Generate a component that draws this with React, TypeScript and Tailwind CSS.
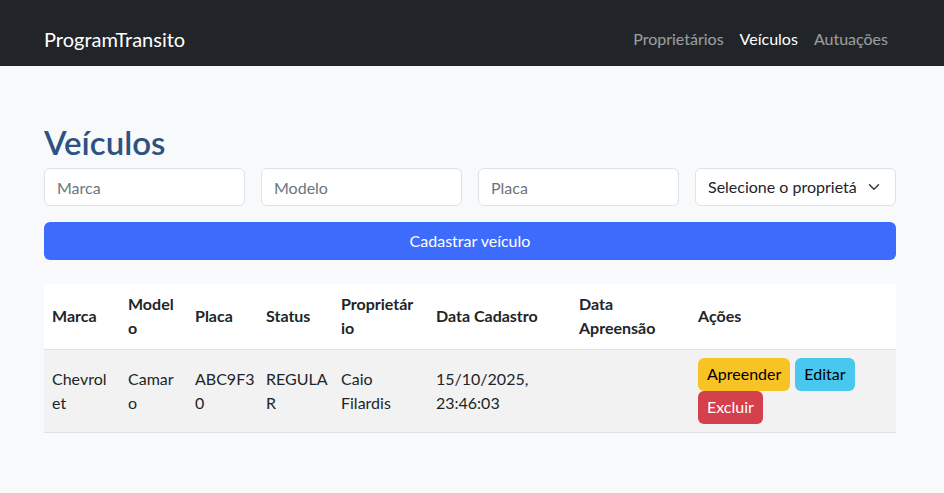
import React from "react";

const font = { fontFamily: 'Lato, "Noto Sans", sans-serif' };

function NavBar() {
  return (
    <header className="h-[66px] bg-[#212529]">
      <div className="ml-[44px] flex h-full w-[852px] items-center justify-between pt-[12px]">
        <span className="text-[20px] text-white">ProgramTransito</span>
        <nav className="flex items-center text-base">
          <a className="px-2 text-white/55">Proprietários</a>
          <a className="px-2 text-white">Veículos</a>
          <a className="px-2 text-white/55">Autuações</a>
        </nav>
      </div>
    </header>
  );
}

// line breaks as the narrow table wraps them
const columns = [
  { label: ["Marca"], w: "w-[76px]" },
  { label: ["Model", "o"], w: "w-[67px]" },
  { label: ["Placa"], w: "w-[71px]" },
  { label: ["Status"], w: "w-[75px]" },
  { label: ["Proprietár", "io"], w: "w-[95px]" },
  { label: ["Data Cadastro"], w: "w-[143px]" },
  { label: ["Data", "Apreensão"], w: "w-[119px]" },
  { label: ["Ações"], w: "w-[206px]" },
];

const row = [
  ["Chevrol", "et"],
  ["Camar", "o"],
  ["ABC9F3", "0"],
  ["REGULA", "R"],
  ["Caio", "Filardis"],
  ["15/10/2025,", "23:46:03"],
  [],
];

function Lines({ parts }: { parts: string[] }) {
  return (
    <>
      {parts.map((p, i) => (
        <span key={i} className="block whitespace-nowrap">
          {p}
        </span>
      ))}
    </>
  );
}

export default function App() {
  return (
    <div className="min-h-[493px] bg-[#f8f9fa] text-[#212529]" style={font}>
      <NavBar />
      <main className="ml-[44px] w-[852px] pt-[52px]">
        <h1 className="text-[33px] font-semibold leading-[48px] text-[#2c5282]">Veículos</h1>

        <div className="mt-[2px] grid grid-cols-4 gap-4">
          {["Marca", "Modelo", "Placa"].map((p) => (
            <input
              key={p}
              placeholder={p}
              className="h-[38px] rounded-md border border-[#dee2e6] bg-white px-3 text-base text-[#212529] placeholder:text-[#6c757d]"
            />
          ))}
          <div className="flex h-[38px] items-center justify-between rounded-md border border-[#dee2e6] bg-white pl-3 pr-[15px]">
            <span className="overflow-hidden whitespace-nowrap text-base">Selecione o proprietá</span>
            <svg className="ml-2 h-3 w-3 shrink-0" viewBox="0 0 16 16" fill="none" stroke="#343a40" strokeWidth="2" strokeLinecap="round" strokeLinejoin="round">
              <path d="m2 5 6 6 6-6" />
            </svg>
          </div>
        </div>

        <button className="mt-4 h-[38px] w-full rounded-md bg-[#3d6bfc] text-base text-white">
          Cadastrar veículo
        </button>

        <table className="mt-6 w-full table-fixed border-collapse text-base leading-6">
          <thead>
            <tr className="h-[65px] border-b border-[#dee2e6] bg-white">
              {columns.map((c) => (
                <th key={c.label.join("")} className={`${c.w} p-2 text-left font-bold`}>
                  <Lines parts={c.label} />
                </th>
              ))}
            </tr>
          </thead>
          <tbody>
            <tr className="h-[83px] border-b border-[#dee2e6] bg-[#f2f2f2]">
              {row.map((v, i) => (
                <td key={i} className="p-2 align-middle">
                  <Lines parts={v} />
                </td>
              ))}
              <td className="p-2 align-middle">
                <div className="flex flex-wrap gap-x-[5px]">
                  <button className="h-[33px] rounded-md bg-[#f8c325] px-[9px] text-base text-black">Apreender</button>
                  <button className="h-[33px] rounded-md bg-[#48c8ef] px-[9px] text-base text-black">Editar</button>
                  <div className="w-full" />
                  <button className="h-[33px] rounded-md bg-[#d4404c] px-[9px] text-base text-white">Excluir</button>
                </div>
              </td>
            </tr>
          </tbody>
        </table>
      </main>
    </div>
  );
}
